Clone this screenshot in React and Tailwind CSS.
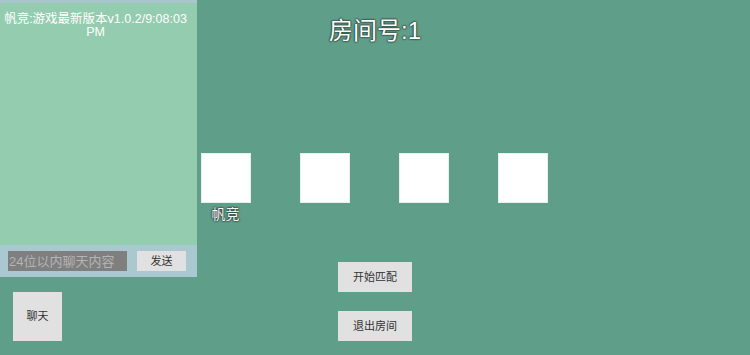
import React from 'react';

const font = { fontFamily: '"Liberation Sans", "Noto Sans CJK SC", sans-serif' };

export default function App() {
  const seats = ['帆竞', '', '', ''];
  return (
    <div className="relative w-[750px] h-[355px] overflow-hidden bg-[#5f9e88]" style={font}>
      {/* room */}
      <div className="flex flex-col items-center pt-[16px]">
        <h1 className="text-[24px] leading-[30px] text-white [text-shadow:0_0_1px_#25332e,0_0_2px_#25332e,0_0_2px_#25332e]">房间号:1</h1>
        <div className="mt-[107px] flex items-start gap-[49px] pr-[2px]">
          {seats.map((name, i) => (
            <div key={i} className="flex w-[50px] flex-col items-center">
              <div className="h-[50px] w-[50px] bg-white border border-[#e8f0ec]" />
              <span className="mt-[3px] h-[16px] text-[14px] leading-[16px] text-white [text-shadow:0_0_1px_#25332e,0_0_2px_#25332e,0_0_2px_#25332e]">{name}</span>
            </div>
          ))}
        </div>
        <button className="mt-[40px] h-[30px] w-[74px] bg-[#e1e1e1] text-[11px] text-[#333]">开始匹配</button>
        <button className="mt-[19px] h-[30px] w-[74px] bg-[#e1e1e1] text-[11px] text-[#333]">退出房间</button>
      </div>

      {/* chat overlay */}
      <div className="absolute left-0 top-0 flex h-[277px] w-[197px] flex-col">
        <div className="h-[3px] bg-[#a9c5cc]" />
        <div className="flex-1 bg-[#94ccb0] pl-[2px] pr-[8px] pt-[10px] text-center text-[12.5px] leading-[13px] text-white">
          帆竞:游戏最新版本v1.0.2/9:08:03 PM
        </div>
        <div className="flex h-[32px] items-center bg-[#a9c8cf] px-[8px]">
          <input
            className="h-[20px] w-[119px] bg-[#7f7f7f] px-[1px] text-[13px] text-white outline-none placeholder:text-[#b4b4b4]"
            placeholder="24位以内聊天内容"
            style={font}
          />
          <button className="ml-[10px] h-[20px] w-[49px] bg-[#e1e1e1] text-[11px] text-[#333]">发送</button>
        </div>
      </div>

      <button className="absolute left-[13px] top-[292px] h-[49px] w-[49px] bg-[#e1e1e1] text-[11px] text-[#333]">聊天</button>
    </div>
  );
}
